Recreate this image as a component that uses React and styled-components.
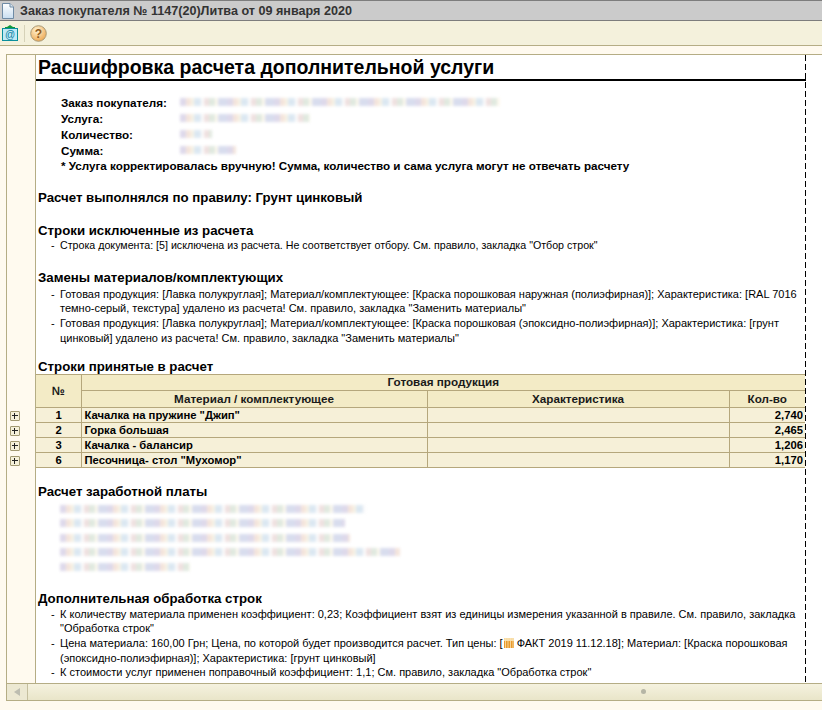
import React from 'react';
import styled, { createGlobalStyle } from 'styled-components';

const GlobalStyle = createGlobalStyle`
  html, body {
    margin: 0;
    padding: 0;
    background: #fffaef;
  }
  * {
    box-sizing: border-box;
  }
`;

const details = [
  { label: 'Заказ покупателя:', blur: 320 },
  { label: 'Услуга:', blur: 130 },
  { label: 'Количество:', blur: 32 },
  { label: 'Сумма:', blur: 56 },
];

const rows = [
  { no: 1, name: 'Качалка на пружине "Джип"', qty: '2,740' },
  { no: 2, name: 'Горка большая', qty: '2,465' },
  { no: 3, name: 'Качалка - балансир', qty: '1,206' },
  { no: 6, name: 'Песочница- стол "Мухомор"', qty: '1,170' },
];

const salary = [306, 285, 290, 340, 130];

function DocIcon() {
  return (
    <svg width="12" height="16" viewBox="0 0 12 16">
      <defs>
        <linearGradient id="doc" x1="0" y1="0" x2="0" y2="1">
          <stop offset="0" stopColor="#ffffff" />
          <stop offset="1" stopColor="#c9def0" />
        </linearGradient>
      </defs>
      <path d="M.5 .5H8L11.5 4V15.5H.5Z" fill="url(#doc)" stroke="#6f8ba5" />
      <path d="M8 .5V4H11.5" fill="#dbe7f1" stroke="#6f8ba5" />
    </svg>
  );
}

function MailIcon() {
  return (
    <svg width="16" height="16" viewBox="0 0 16 16">
      <path d="M8 0L11 2H13V4H3V2H5Z" fill="#0e9a3c" />
      <rect x=".5" y="3.5" width="15" height="12" fill="#bfeaf6" stroke="#0a8f9c" />
      <text x="8" y="13" fontSize="10" fontFamily="Liberation Sans" fill="#0a7fa0" textAnchor="middle">@</text>
    </svg>
  );
}

function HelpIcon() {
  return (
    <svg width="17" height="17" viewBox="0 0 17 17">
      <defs>
        <radialGradient id="help" cx="40%" cy="30%" r="75%">
          <stop offset="0" stopColor="#fff3d2" />
          <stop offset="1" stopColor="#eda64f" />
        </radialGradient>
      </defs>
      <circle cx="8.5" cy="8.5" r="7.8" fill="url(#help)" stroke="#a99a78" />
      <text x="8.5" y="13" fontSize="12" fontFamily="Liberation Sans" fontWeight="700" fill="#8f5a1c" textAnchor="middle">?</text>
    </svg>
  );
}

function PriceIcon() {
  return (
    <svg width="10" height="10" viewBox="0 0 10 10">
      <rect width="10" height="3" fill="#f7dca6" />
      <rect y="3" width="10" height="7" fill="#e89a2c" />
      <path d="M1.5 0V10M4 0V10M6.5 0V10M9 0V10" stroke="#fbe3b4" strokeWidth=".8" />
    </svg>
  );
}

function App() {
  return (
    <Window>
      <GlobalStyle />
      <TitleBar>
        <DocIcon />
        <TitleText>Заказ покупателя № 1147(20)Литва от 09 января 2020</TitleText>
      </TitleBar>
      <Toolbar>
        <ToolButton><MailIcon /></ToolButton>
        <ToolDivider />
        <ToolButton><HelpIcon /></ToolButton>
      </Toolbar>
      <Sheet>
        <SheetBody>
          <Gutter>
            {rows.map((row) => (
              <Expander key={row.no} />
            ))}
          </Gutter>
          <Page>
            <PageBreak />
            <Title>Расшифровка расчета дополнительной услуги</Title>
            <Details>
              {details.map((item) => (
                <DetailRow key={item.label}>
                  <DetailLabel>{item.label}</DetailLabel>
                  <Blurred style={{ width: item.blur }} />
                </DetailRow>
              ))}
              <Note>* Услуга корректировалась вручную! Сумма, количество и сама услуга могут не отвечать расчету</Note>
            </Details>

            <Heading $top={16}>Расчет выполнялся по правилу: Грунт цинковый</Heading>

            <Heading $top={17}>Строки исключенные из расчета</Heading>
            <Items $top={-1}>
              <Item $small>Строка документа: [5] исключена из расчета. Не соответствует отбору. См. правило, закладка "Отбор строк"</Item>
            </Items>

            <Heading $top={17}>Замены материалов/комплектующих</Heading>
            <Items $top={1}>
              <Item>
                Готовая продукция: [Лавка полукруглая]; Материал/комплектующее: [Краска порошковая наружная (полиэфирная)]; Характеристика: [RAL 7016
                <br />
                темно-серый, текстура] удалено из расчета! См. правило, закладка "Заменить материалы"
              </Item>
              <Item>
                Готовая продукция: [Лавка полукруглая]; Материал/комплектующее: [Краска порошковая (эпоксидно-полиэфирная)]; Характеристика: [грунт
                <br />
                цинковый] удалено из расчета! См. правило, закладка "Заменить материалы"
              </Item>
            </Items>

            <Heading $top={13}>Строки принятые в расчет</Heading>
            <Table>
              <colgroup>
                <col width="45" />
                <col width="346" />
                <col width="302" />
                <col width="76" />
              </colgroup>
              <thead>
                <tr>
                  <HeadCell rowSpan={2}>№</HeadCell>
                  <HeadCell colSpan={3}>Готовая продукция</HeadCell>
                </tr>
                <tr>
                  <HeadCell $tall>Материал / комплектующее</HeadCell>
                  <HeadCell $tall>Характеристика</HeadCell>
                  <HeadCell $tall>Кол-во</HeadCell>
                </tr>
              </thead>
              <tbody>
                {rows.map((row) => (
                  <tr key={row.no}>
                    <DataCell $align="center">{row.no}</DataCell>
                    <DataCell>{row.name}</DataCell>
                    <DataCell />
                    <DataCell $align="right">{row.qty}</DataCell>
                  </tr>
                ))}
              </tbody>
            </Table>

            <Heading $top={16}>Расчет заработной платы</Heading>
            <SalaryList>
              {salary.map((width, i) => (
                <Blurred key={i} style={{ width }} />
              ))}
            </SalaryList>

            <Heading $top={20}>Дополнительная обработка строк</Heading>
            <Items>
              <Item>
                К количеству материала применен коэффициент: 0,23; Коэффициент взят из единицы измерения указанной в правиле. См. правило, закладка
                <br />
                "Обработка строк"
              </Item>
              <Item>
                Цена материала: 160,00 Грн; Цена, по которой будет производится расчет. Тип цены: [<PriceIcon /> ФАКТ 2019 11.12.18]; Материал: [Краска порошковая
                <br />
                (эпоксидно-полиэфирная)]; Характеристика: [грунт цинковый]
              </Item>
              <Item>К стоимости услуг применен поправочный коэффициент: 1,1; См. правило, закладка "Обработка строк"</Item>
            </Items>
          </Page>
        </SheetBody>
        <ScrollBar>
          <ScrollButton>
            <ScrollArrow />
          </ScrollButton>
          <ScrollTrack>
            <ScrollGrip />
          </ScrollTrack>
        </ScrollBar>
      </Sheet>
    </Window>
  );
}

export default App;

const Window = styled.div`
  display: flex;
  flex-direction: column;
  width: 822px;
  height: 710px;
  overflow: hidden;
  background: #fffaef;
  color: #000;
  font-family: 'Liberation Sans', Arial, sans-serif;
  font-size: 12px;
`;

const TitleBar = styled.div`
  display: flex;
  align-items: center;
  gap: 6px;
  height: 21px;
  flex-shrink: 0;
  padding-left: 2px;
  background: #cbcbcb;
  border-top: 1px solid #7d7d7d;
  border-bottom: 1px solid #7d7d7d;
`;

const TitleText = styled.span`
  font-size: 12.6px;
  font-weight: 700;
  color: #333;
`;

const Toolbar = styled.div`
  display: flex;
  align-items: center;
  gap: 4px;
  height: 25px;
  flex-shrink: 0;
  padding-left: 2px;
  background: #f4f1dc;
  border-bottom: 1px solid #b5ad85;
`;

const ToolButton = styled.div`
  display: flex;
  align-items: center;
  justify-content: center;
  width: 18px;
  height: 18px;

  &:first-child {
    justify-content: flex-start;
  }
`;

const ToolDivider = styled.div`
  width: 1px;
  height: 17px;
  background: #d6d2b8;
`;

const Sheet = styled.div`
  display: flex;
  flex-direction: column;
  height: 647px;
  flex-shrink: 0;
  margin: 8px 0 0 6px;
  border-top: 1px solid #b5ad85;
  border-left: 1px solid #b5ad85;
  border-bottom: 1px solid #b5ad85;
`;

const SheetBody = styled.div`
  display: flex;
  flex: 1;
  min-height: 0;
`;

const Gutter = styled.div`
  display: flex;
  flex-direction: column;
  gap: 5px;
  width: 29px;
  flex-shrink: 0;
  padding: 356px 0 0 3px;
  background: #fffaef;
  border-right: 1px solid #b5ad85;
`;

const Expander = styled.div`
  position: relative;
  width: 10px;
  height: 10px;
  border: 1px solid #a39a73;
  border-radius: 1px;
  background: #f6f1da;

  &::before {
    content: '';
    position: absolute;
    left: 1px;
    top: 3px;
    width: 6px;
    height: 1px;
    background: #222;
  }

  &::after {
    content: '';
    position: absolute;
    left: 3px;
    top: 1px;
    width: 1px;
    height: 6px;
    background: #222;
  }
`;

const Page = styled.div`
  position: relative;
  flex: 1;
  min-width: 0;
  overflow: hidden;
  background: #fff;
`;

const PageBreak = styled.div`
  position: absolute;
  top: 0;
  bottom: 0;
  left: 769px;
  width: 1px;
  background: repeating-linear-gradient(to bottom, #000 0 6px, transparent 6px 9px);
`;

const Title = styled.h1`
  width: 770px;
  height: 26px;
  margin: 0;
  padding-left: 2px;
  font-size: 19.5px;
  line-height: 25px;
  font-weight: 700;
  border-bottom: 2px solid #000;
`;

const Details = styled.div`
  display: flex;
  flex-direction: column;
  padding: 13px 0 0 25px;
`;

const DetailRow = styled.div`
  display: flex;
  align-items: center;
  height: 16px;
`;

const DetailLabel = styled.span`
  width: 119px;
  font-weight: 700;
  font-size: 11.7px;
`;

const Blurred = styled.div`
  height: 8px;
  background: repeating-linear-gradient(
    to right,
    #d6d0e6 0 6px,
    #f2dfd4 6px 11px,
    #f6f1df 11px 14px,
    #d3e2ef 14px 21px,
    #fbfbfb 21px 24px,
    #ecd9d9 24px 29px,
    #d9e4d8 29px 35px,
    #fdf8ea 35px 38px,
    #cfd5ea 38px 47px
  );
  filter: blur(1.6px);
  opacity: 0.8;
`;

const Note = styled.div`
  height: 16px;
  line-height: 16px;
  font-size: 11.67px;
  font-weight: 700;
`;

const Heading = styled.h2`
  margin: ${(p) => p.$top}px 0 0;
  padding-left: 2px;
  font-size: 13.25px;
  line-height: 16px;
  font-weight: 700;
`;

const Items = styled.ul`
  margin: ${(p) => p.$top || 0}px 0 0;
  padding: 0 0 0 15px;
  list-style: none;
`;

const Item = styled.li`
  position: relative;
  padding-left: 9px;
  font-size: ${(p) => (p.$small ? 10.67 : 11)}px;
  line-height: 14.7px;
  white-space: nowrap;

  &::before {
    content: '-';
    position: absolute;
    left: 0;
    top: 0;
  }

  svg {
    vertical-align: -1px;
    margin-left: 1px;
  }
`;

const Table = styled.table`
  table-layout: fixed;
  width: 769px;
  margin: -1px 0 0;
  border-collapse: collapse;
  border-top: 1px solid #b5a77c;
`;

const HeadCell = styled.th`
  height: ${(p) => (p.$tall ? 17 : 16)}px;
  padding: 0;
  font-size: 11.7px;
  line-height: 14px;
  font-weight: 700;
  text-align: center;
  background: #f3ebc6;
  border: 1px solid #b5a77c;
  border-left-width: ${(p) => (p.rowSpan ? 0 : 1)}px;
  border-right-width: 0;
  color: #1a1a1a;
`;

const DataCell = styled.td`
  height: 15px;
  padding: 0 2px 0 3px;
  font-size: 11.25px;
  line-height: 14px;
  font-weight: 700;
  text-align: ${(p) => p.$align || 'left'};
  background: #f6f0d8;
  border: 1px solid #b5a77c;
  border-right-width: 0;
  border-left-width: 1px;
  &:first-child {
    border-left-width: 0;
  }
`;

const SalaryList = styled.div`
  display: flex;
  flex-direction: column;
  gap: 6.5px;
  padding: 5px 0 0 24px;
`;

const ScrollBar = styled.div`
  display: flex;
  height: 17px;
  flex-shrink: 0;
  border-top: 1px solid #b5ad85;
`;

const ScrollButton = styled.div`
  display: flex;
  align-items: center;
  justify-content: center;
  width: 21px;
  background: #ece8d2;
  border-right: 1px solid #c5bf9f;
`;

const ScrollArrow = styled.div`
  width: 0;
  height: 0;
  border-style: solid;
  border-width: 4px 6px 4px 0;
  border-color: transparent #bdbdb0 transparent transparent;
`;

const ScrollTrack = styled.div`
  position: relative;
  flex: 1;
  background: linear-gradient(to bottom, #f5f2df, #e9e5c9);
`;

const ScrollGrip = styled.div`
  position: absolute;
  left: 613px;
  top: 5px;
  width: 5px;
  height: 5px;
  border-radius: 50%;
  background: #b5b5a5;
`;
